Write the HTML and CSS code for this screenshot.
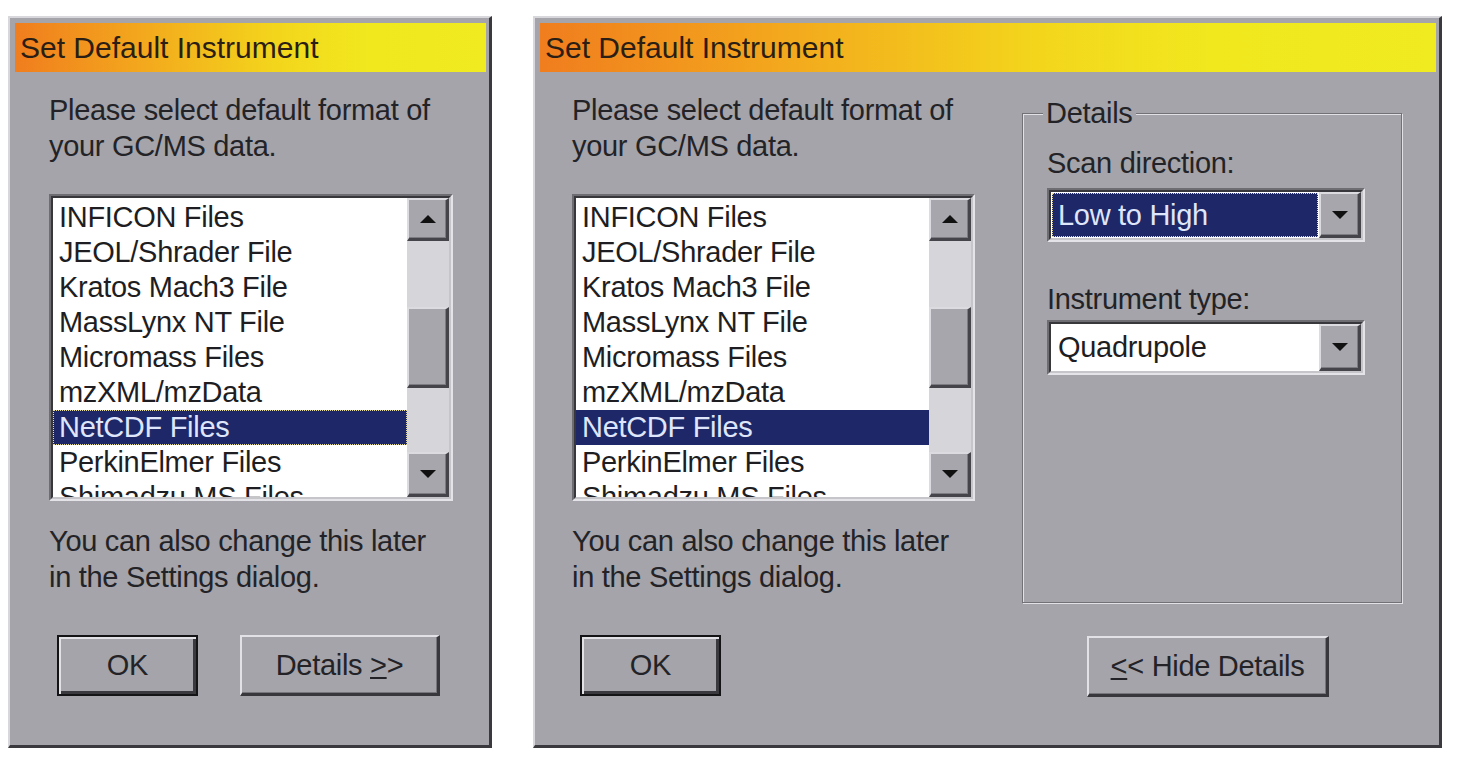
FILE: index.html
```html
<!DOCTYPE html>
<html lang="en">
<head>
<meta charset="utf-8">
<title>Set Default Instrument</title>
<link rel="stylesheet" href="styles.css">
</head>
<body>
<div class="screen">
  <div class="dialog dialog-small">
    <div class="titlebar">Set Default Instrument</div>
    <div class="content content-small">
      <div class="main-col">
        <p class="prompt">Please select default format of<br>your GC/MS data.</p>
        <div class="listbox listbox-small">
          <div class="listbox-inner">
            <ul class="items">
              <li>INFICON Files</li>
              <li>JEOL/Shrader File</li>
              <li>Kratos Mach3 File</li>
              <li>MassLynx NT File</li>
              <li>Micromass Files</li>
              <li>mzXML/mzData</li>
              <li class="selected focused">NetCDF Files</li>
              <li>PerkinElmer Files</li>
              <li>Shimadzu MS Files</li>
            </ul>
            <div class="scrollbar">
              <div class="sb-btn sb-up"><svg width="16" height="8" viewBox="0 0 16 8"><path d="M8 0 L16 8 L0 8 Z" fill="#111"/></svg></div>
              <div class="track"><div class="thumb"></div></div>
              <div class="sb-btn sb-down"><svg width="16" height="8" viewBox="0 0 16 8"><path d="M0 0 L16 0 L8 8 Z" fill="#111"/></svg></div>
            </div>
          </div>
        </div>
        <p class="note">You can also change this later<br>in the Settings dialog.</p>
        <div class="buttons">
          <button class="btn btn-default btn-ok">OK</button>
          <button class="btn btn-details">Details <span class="ul">&gt;</span>&gt;</button>
        </div>
      </div>
    </div>
  </div>

  <div class="dialog dialog-wide">
    <div class="titlebar">Set Default Instrument</div>
    <div class="content content-wide">
      <div class="main-col">
        <p class="prompt">Please select default format of<br>your GC/MS data.</p>
        <div class="listbox listbox-wide">
          <div class="listbox-inner">
            <ul class="items">
              <li>INFICON Files</li>
              <li>JEOL/Shrader File</li>
              <li>Kratos Mach3 File</li>
              <li>MassLynx NT File</li>
              <li>Micromass Files</li>
              <li>mzXML/mzData</li>
              <li class="selected">NetCDF Files</li>
              <li>PerkinElmer Files</li>
              <li>Shimadzu MS Files</li>
            </ul>
            <div class="scrollbar">
              <div class="sb-btn sb-up"><svg width="16" height="8" viewBox="0 0 16 8"><path d="M8 0 L16 8 L0 8 Z" fill="#111"/></svg></div>
              <div class="track"><div class="thumb"></div></div>
              <div class="sb-btn sb-down"><svg width="16" height="8" viewBox="0 0 16 8"><path d="M0 0 L16 0 L8 8 Z" fill="#111"/></svg></div>
            </div>
          </div>
        </div>
        <p class="note">You can also change this later<br>in the Settings dialog.</p>
        <div class="buttons">
          <button class="btn btn-ok btn-plain">OK</button>
        </div>
      </div>
      <div class="side-col">
        <fieldset class="group">
          <legend class="group-legend">Details</legend>
          <div class="field-label label-first">Scan direction:</div>
          <div class="combo combo-first">
            <div class="combo-inner">
              <div class="combo-field"><div class="combo-value selected">Low to High</div></div>
              <div class="combo-btn"><svg width="16" height="8" viewBox="0 0 16 8"><path d="M0 0 L16 0 L8 8 Z" fill="#111"/></svg></div>
            </div>
          </div>
          <div class="field-label label-second">Instrument type:</div>
          <div class="combo combo-second">
            <div class="combo-inner">
              <div class="combo-field"><div class="combo-value">Quadrupole</div></div>
              <div class="combo-btn"><svg width="16" height="8" viewBox="0 0 16 8"><path d="M0 0 L16 0 L8 8 Z" fill="#111"/></svg></div>
            </div>
          </div>
        </fieldset>
        <button class="btn btn-hide"><span class="ul">&lt;</span>&lt; Hide Details</button>
      </div>
    </div>
  </div>
</div>
</body>
</html>
```

FILE: styles.css
```css
* { box-sizing: border-box; }

html, body {
  margin: 0;
  padding: 0;
  background: #ffffff;
}

body {
  font-family: "Liberation Sans", Arial, sans-serif;
  color: #232327;
  width: 1464px;
  height: 776px;
  overflow: hidden;
}

.screen {
  display: flex;
  gap: 41px;
  padding: 16px 0 0 8px;
}

.dialog {
  height: 732px;
  background: #a4a4aa;
  border-style: solid;
  border-width: 2px 3px 3px 2px;
  border-color: #d8d8dc #3a3a3e #3a3a3e #d8d8dc;
  padding: 5px 3px 5px 5px;
  display: flex;
  flex-direction: column;
}

.dialog-small { width: 484px; }
.dialog-wide { width: 909px; }

.titlebar {
  height: 49px;
  line-height: 49px;
  padding-left: 5px;
  font-size: 30px;
  color: #2b1e14;
  background: linear-gradient(to right, #f07d1e 0%, #f3a51d 25%, #f3d51c 55%, #f1e81e 75%, #f0ea20 100%);
  white-space: nowrap;
}

.content {
  display: flex;
  padding-top: 20px;
}
.content-small { padding-left: 34px; }
.content-wide { padding-left: 32px; gap: 47px; }

.main-col {
  display: flex;
  flex-direction: column;
}

.prompt, .note {
  margin: 0;
  font-size: 29px;
  line-height: 36px;
  letter-spacing: -0.3px;
  white-space: nowrap;
}

.note { margin-top: 22px; }

.listbox {
  margin-top: 30px;
  height: 307px;
  border: 2px solid;
  border-color: #6e6e72 #e4e4e8 #e4e4e8 #6e6e72;
}
.listbox-small { width: 404px; }
.listbox-wide { width: 403px; }

.listbox-inner {
  height: 100%;
  display: flex;
  border: 2px solid;
  border-color: #38383c #c6c6ca #c6c6ca #38383c;
  background: #ffffff;
}

.items {
  flex: 1;
  margin: 0;
  padding: 2px 0 0 0;
  list-style: none;
  overflow: hidden;
}

.items li {
  height: 35px;
  line-height: 35px;
  padding-left: 6px;
  font-size: 29px;
  letter-spacing: -0.3px;
  white-space: nowrap;
  color: #1e1e22;
}

.items li.selected {
  background: #1e2767;
  color: #dfe5fb;
}

.items li.focused {
  outline: 1px dotted #e8dea0;
  outline-offset: -1px;
}

.scrollbar {
  width: 42px;
  display: flex;
  flex-direction: column;
  background: #d6d6da;
}

.sb-btn, .thumb, .combo-btn {
  background: #a6a6ac;
  border-style: solid;
  border-width: 2px 3px 3px 2px;
  border-color: #dcdce0 #44444a #44444a #dcdce0;
  box-shadow: inset -1px -1px 0 #7c7c82;
}

.sb-btn {
  display: flex;
  align-items: center;
  justify-content: center;
}
.sb-up { height: 43px; }
.sb-down { height: 45px; }

.track {
  flex: 1;
  padding-top: 66px;
}

.thumb { height: 81px; }

.buttons {
  margin-top: 40px;
  display: flex;
  gap: 42px;
  padding-left: 8px;
}

.btn {
  height: 61px;
  padding: 0;
  font-family: "Liberation Sans", Arial, sans-serif;
  font-size: 29px;
  letter-spacing: -0.3px;
  color: #232327;
  background: #a4a4aa;
  border-style: solid;
  border-width: 2px 3px 3px 2px;
  border-color: #e2e2e6 #38383c #38383c #e2e2e6;
  box-shadow: inset -1px -1px 0 #76767c;
  white-space: nowrap;
}

.btn-default, .btn-plain {
  border: 2px solid #141416;
  box-shadow: inset 2px 2px 0 #e2e2e6, inset -3px -3px 0 #3a3a3e;
}

.btn-ok { width: 141px; }
.btn-details { width: 200px; }
.btn-hide { width: 242px; margin-top: 33px; margin-left: 65px; }

.ul { text-decoration: underline; }

.side-col {
  display: flex;
  flex-direction: column;
  width: 380px;
}

.group {
  margin: 3px 0 0 0;
  padding: 14px 24px 0 24px;
  height: 508px;
  width: 380px;
  border: 1px solid #727276;
  box-shadow: 1px 1px 0 #e2e2e6, inset 1px 1px 0 #e2e2e6;
  display: flex;
  flex-direction: column;
  min-width: 0;
}

.group-legend {
  margin-left: -4px;
  padding: 0 3px;
  font-size: 29px;
  line-height: 36px;
  letter-spacing: -0.3px;
  background: #a4a4aa;
}

.field-label {
  font-size: 29px;
  line-height: 36px;
  letter-spacing: -0.3px;
  white-space: nowrap;
}
.label-second { margin-top: 39px; }

.combo {
  width: 318px;
  border: 2px solid;
  border-color: #6e6e72 #e4e4e8 #e4e4e8 #6e6e72;
}
.combo-first { margin-top: 7px; height: 54px; }
.combo-second { margin-top: 3px; height: 55px; }

.combo-inner {
  height: 100%;
  display: flex;
  border: 2px solid;
  border-color: #38383c #c6c6ca #c6c6ca #38383c;
  background: #ffffff;
}

.combo-field {
  flex: 1;
  padding: 1px;
}

.combo-value {
  height: 100%;
  display: flex;
  align-items: center;
  padding-left: 6px;
  font-size: 29px;
  letter-spacing: -0.3px;
  white-space: nowrap;
  color: #1e1e22;
}

.combo-value.selected {
  background: #1e2767;
  color: #dfe5fb;
  outline: 1px dotted #e8dea0;
  outline-offset: -1px;
}

.combo-btn {
  width: 42px;
  display: flex;
  align-items: center;
  justify-content: center;
}
```
